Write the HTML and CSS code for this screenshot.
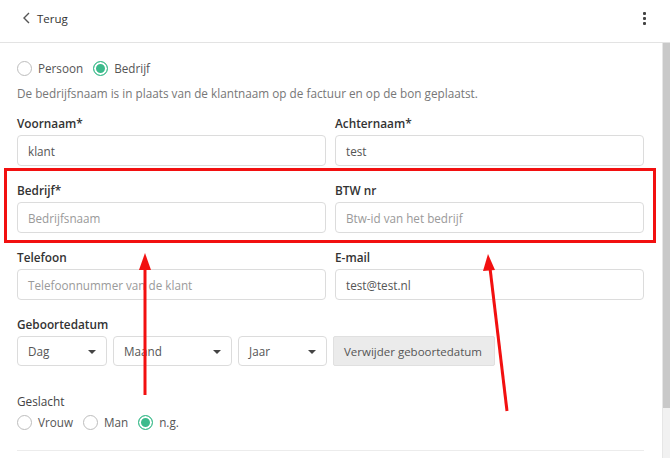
FILE: index.html
```html
<!DOCTYPE html>
<html lang="nl">
<head>
<meta charset="utf-8">
<link rel="stylesheet" href="styles.css">
</head>
<body>
<div class="app">
  <header class="topbar">
    <a class="back">
      <svg class="chev" width="9" height="12" viewBox="0 0 9 12"><path d="M7 1 L2 6 L7 11" fill="none" stroke="#555" stroke-width="1.4"/></svg>
      <span>Terug</span>
    </a>
    <div class="kebab"><i></i><i></i><i></i></div>
  </header>
  <div class="body">
    <main class="form">
      <div class="radios top">
        <label class="radio"><span class="dot"></span>Persoon</label>
        <label class="radio"><span class="dot on"></span>Bedrijf</label>
      </div>
      <p class="hint">De bedrijfsnaam is in plaats van de klantnaam op de factuur en op de bon geplaatst.</p>

      <div class="grid">
        <div class="field">
          <div class="lbl">Voornaam*</div>
          <div class="input">klant</div>
        </div>
        <div class="field">
          <div class="lbl">Achternaam*</div>
          <div class="input">test</div>
        </div>
        <div class="field">
          <div class="lbl">Bedrijf*</div>
          <div class="input ph">Bedrijfsnaam</div>
        </div>
        <div class="field">
          <div class="lbl">BTW nr</div>
          <div class="input ph">Btw-id van het bedrijf</div>
        </div>
        <div class="field">
          <div class="lbl">Telefoon</div>
          <div class="input ph">Telefoonnummer van de klant</div>
        </div>
        <div class="field">
          <div class="lbl">E-mail</div>
          <div class="input">test@test.nl</div>
        </div>
      </div>

      <div class="field">
        <div class="lbl">Geboortedatum</div>
        <div class="dates">
          <div class="select s-dag">Dag<span class="caret"></span></div>
          <div class="select s-maand">Maand<span class="caret"></span></div>
          <div class="select s-jaar">Jaar<span class="caret"></span></div>
          <div class="btn">Verwijder geboortedatum</div>
        </div>
      </div>

      <div class="gender">
        <div class="lbl light">Geslacht</div>
        <div class="radios">
          <label class="radio"><span class="dot"></span>Vrouw</label>
          <label class="radio"><span class="dot"></span>Man</label>
          <label class="radio"><span class="dot on"></span>n.g.</label>
        </div>
      </div>
      <hr class="sep">
    </main>
    <div class="scrollbar"><div class="thumb"></div></div>
  </div>

  <div class="highlight"></div>
  <svg class="arrows" width="670" height="458" viewBox="0 0 670 458">
    <line x1="145" y1="395" x2="145" y2="266" stroke="#f21010" stroke-width="3"/>
    <polygon points="145,253 139,270 151,270" fill="#f21010"/>
    <line x1="507" y1="411" x2="490" y2="268" stroke="#f21010" stroke-width="3"/>
    <polygon points="488,254 483,271 495,270" fill="#f21010"/>
  </svg>
</div>
</body>
</html>
```

FILE: styles.css
```css
* { box-sizing: border-box; }
html, body { margin: 0; padding: 0; background: #fff; }
body {
  font-family: "Open Sans", "Noto Sans", sans-serif;
  color: #333;
  font-size: 11.7px;
  width: 670px;
  height: 458px;
  overflow: hidden;
}
.app { position: relative; width: 670px; height: 458px; }

.topbar {
  height: 43px;
  border-bottom: 1px solid #e3e3e3;
  display: flex;
  align-items: center;
  justify-content: space-between;
  padding: 0 22px 0 22px;
}
.back {
  display: flex;
  align-items: center;
  gap: 6px;
  color: #333;
  font-size: 11.5px;
  margin-top: -6px;
}
.chev { display: block; }
.kebab {
  display: flex;
  flex-direction: column;
  gap: 2px;
  margin-top: -6px;
  margin-right: 2px;
}
.kebab i { display: block; width: 3px; height: 3px; background: #444; border-radius: 1px; }

.body { display: flex; height: 415px; }
.form {
  flex: 1;
  padding: 16px 18px 0 17px;
}
.scrollbar {
  width: 8px;
  background: #f1f1f1;
  border-left: 1px solid #e6e6e6;
}
.thumb { height: 365px; background: #c9c9c9; }

.radios { display: flex; align-items: center; gap: 10px; height: 18px; }
.radio {
  display: flex;
  align-items: center;
  gap: 6px;
  color: #555;
  font-size: 11.7px;
}
.dot {
  width: 15px;
  height: 15px;
  border-radius: 50%;
  border: 1px solid #bdbdbd;
  background: #fff;
  display: inline-block;
}
.dot.on {
  border-color: #3cbb8c;
  background: #3cbb8c;
  box-shadow: inset 0 0 0 2px #fff;
}

.hint {
  margin: 7px 0 0 0;
  font-size: 11.75px;
  line-height: 18px;
  color: #777;
}

.grid {
  display: grid;
  grid-template-columns: 309px 309px;
  column-gap: 9px;
  margin-top: 12px;
}
.field { margin-bottom: 15px; }
.lbl {
  font-weight: 600;
  font-size: 11.8px;
  line-height: 18px;
  color: #333;
  margin-bottom: 3px;
}
.lbl.light { font-weight: 400; color: #444; }
.input {
  height: 31px;
  border: 1px solid #dcdcdc;
  border-radius: 4px;
  padding: 0 10px;
  display: flex;
  align-items: center;
  color: #555;
  font-size: 11.7px;
}
.input.ph { color: #9a9a9a; }

.dates { display: flex; gap: 6px; }
.select {
  position: relative;
  height: 30px;
  border: 1px solid #dcdcdc;
  border-radius: 4px;
  padding: 0 10px;
  display: flex;
  align-items: center;
  color: #555;
  font-size: 11.7px;
}
.s-dag { width: 90px; }
.s-maand { width: 119px; }
.s-jaar { width: 89px; }
.caret {
  position: absolute;
  right: 10px;
  top: 13px;
  width: 0; height: 0;
  border-left: 4px solid transparent;
  border-right: 4px solid transparent;
  border-top: 4px solid #444;
}
.btn {
  height: 30px;
  width: 162px;
  background: #ebebeb;
  border: 1px solid #e0e0e0;
  border-radius: 2px;
  display: flex;
  align-items: center;
  padding-left: 10px;
  color: #555;
  font-size: 11.5px;
}

.gender { margin-top: 26px; }
.gender .lbl { margin-bottom: 3px; }
.sep {
  margin: 19px 0 0 0;
  border: 0;
  border-top: 1px solid #ececec;
}

.highlight {
  position: absolute;
  left: 4px;
  top: 168px;
  width: 652px;
  height: 75px;
  border: 3px solid #f21010;
}
.arrows { position: absolute; left: 0; top: 0; }
```
